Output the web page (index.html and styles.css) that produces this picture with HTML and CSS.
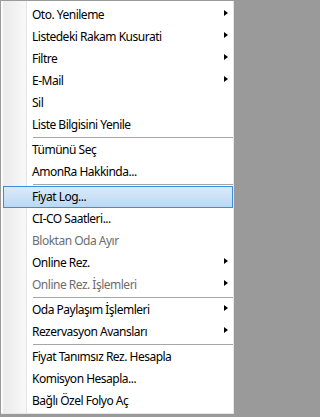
FILE: index.html
```html
<!DOCTYPE html>
<html lang="tr">
<head>
<meta charset="utf-8">
<title>Menu</title>
<link rel="stylesheet" href="styles.css">
</head>
<body>
<div class="menu">
  <div class="item sub">Oto. Yenileme</div>
  <div class="item sub">Listedeki Rakam Kusurati</div>
  <div class="item sub">Filtre</div>
  <div class="item sub">E-Mail</div>
  <div class="item">Sil</div>
  <div class="item">Liste Bilgisini Yenile</div>
  <div class="sep"></div>
  <div class="item">Tümünü Seç</div>
  <div class="item">AmonRa Hakkinda...</div>
  <div class="sep"></div>
  <div class="item active">Fiyat Log...</div>
  <div class="item">CI-CO Saatleri...</div>
  <div class="item disabled">Bloktan Oda Ayır</div>
  <div class="item sub">Online Rez.</div>
  <div class="item sub disabled">Online Rez. İşlemleri</div>
  <div class="sep"></div>
  <div class="item sub">Oda Paylaşım İşlemleri</div>
  <div class="item sub">Rezervasyon Avansları</div>
  <div class="sep"></div>
  <div class="item">Fiyat Tanımsız Rez. Hesapla</div>
  <div class="item">Komisyon Hesapla...</div>
  <div class="item">Bağlı Özel Folyo Aç</div>
</div>
</body>
</html>
```
FILE: styles.css
```css
html, body {
  margin: 0;
  padding: 0;
  background: #9a9a9a;
}
body {
  width: 237px;
  height: 417px;
  overflow: hidden;
}
.menu {
  box-sizing: border-box;
  margin: 1px 0 0 1px;
  width: 233px;
  height: 413px;
  padding: 3px 0 0 2px;
  border-right: 1px solid #e6e6e6;
  border-bottom: 1px solid #e6e6e6;
  background:
    linear-gradient(to right,
      #fbfbfb 0, #fbfbfb 2px,
      #ebebeb 2px, #f8f8f8 25px,
      #e3e3e3 25px, #e3e3e3 26px,
      #ffffff 26px);
  font-family: "Noto Sans", "Open Sans", sans-serif;
  font-size: 12px;
  letter-spacing: -0.5px;
  color: #000;
}
.item {
  position: relative;
  box-sizing: border-box;
  height: 22px;
  line-height: 20px;
  padding-left: 28px;
  white-space: nowrap;
  border: 1px solid transparent;
}
.item.sub::after {
  content: "";
  position: absolute;
  left: 220px;
  top: 5px;
  width: 0;
  height: 0;
  border-top: 3.5px solid transparent;
  border-bottom: 3.5px solid transparent;
  border-left: 4px solid #000;
}
.item.disabled {
  color: #6d6d6d;
}
.item.active {
  border-color: #3b8de0;
  background: linear-gradient(to bottom, #dbeafa, #bad8f2);
}
.sep {
  height: 3px;
  box-sizing: border-box;
  margin-left: 30px;
  border-top: 1px solid transparent;
  background: linear-gradient(to bottom, #a6a6a6 0, #a6a6a6 1px, #ffffff 1px);
  background-clip: padding-box;
}
```
